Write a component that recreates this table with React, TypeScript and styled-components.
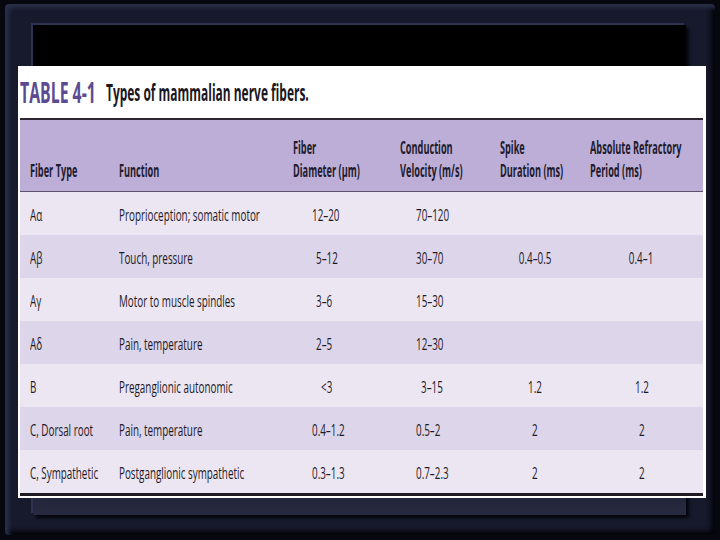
import React from "react";
import styled, { createGlobalStyle } from "styled-components";

const GlobalStyle = createGlobalStyle`
    html, body {
        margin: 0;
        padding: 0;
        background: #0b0c16;
    }
    body {
        font-family: "Open Sans", "Liberation Sans", sans-serif;
    }
`;

const FONT = `"Open Sans", "Liberation Sans", sans-serif`;

type Row = {
    fiber: string;
    fn: string;
    diameter: string;
    velocity: string;
    spike: string;
    refractory: string;
};

const rows: Row[] = [
    { fiber: "Aα", fn: "Proprioception; somatic motor", diameter: "12–20", velocity: "70–120", spike: "", refractory: "" },
    { fiber: "Aβ", fn: "Touch, pressure", diameter: "5–12", velocity: "30–70", spike: "0.4–0.5", refractory: "0.4–1" },
    { fiber: "Aγ", fn: "Motor to muscle spindles", diameter: "3–6", velocity: "15–30", spike: "", refractory: "" },
    { fiber: "Aδ", fn: "Pain, temperature", diameter: "2–5", velocity: "12–30", spike: "", refractory: "" },
    { fiber: "B", fn: "Preganglionic autonomic", diameter: "<3", velocity: "3–15", spike: "1.2", refractory: "1.2" },
    { fiber: "C, Dorsal root", fn: "Pain, temperature", diameter: "0.4–1.2", velocity: "0.5–2", spike: "2", refractory: "2" },
    { fiber: "C, Sympathetic", fn: "Postganglionic sympathetic", diameter: "0.3–1.3", velocity: "0.7–2.3", spike: "2", refractory: "2" },
];

const App = () => {
    return (
        <>
            <GlobalStyle />
            <Slide>
                <Card>
                    <TitleBar>
                        <TableNo>TABLE 4-1</TableNo>
                        <Caption>Types of mammalian nerve fibers.</Caption>
                    </TitleBar>
                    <Table>
                        <HeadRow>
                            <HeadCell><Narrow>Fiber Type</Narrow></HeadCell>
                            <HeadCell><Narrow>Function</Narrow></HeadCell>
                            <HeadCell><Narrow>Fiber<br />Diameter (μm)</Narrow></HeadCell>
                            <HeadCell><Narrow>Conduction<br />Velocity (m/s)</Narrow></HeadCell>
                            <HeadCell><Narrow>Spike<br />Duration (ms)</Narrow></HeadCell>
                            <HeadCell><Narrow>Absolute Refractory<br />Period (ms)</Narrow></HeadCell>
                        </HeadRow>
                        {rows.map((r, i) => (
                            <DataRow key={r.fiber} $shade={i % 2 === 1}>
                                <Cell><Narrow>{r.fiber}</Narrow></Cell>
                                <Cell><Narrow>{r.fn}</Narrow></Cell>
                                <Cell $pad={r.diameter.length <= 2 ? 38 : r.diameter.length <= 4 ? 33 : 29}><Narrow>{r.diameter}</Narrow></Cell>
                                <Cell $pad={r.velocity.length <= 4 ? 31 : 26}><Narrow>{r.velocity}</Narrow></Cell>
                                <Mid><Narrow $mid>{r.spike}</Narrow></Mid>
                                <Mid><Narrow $mid>{r.refractory}</Narrow></Mid>
                            </DataRow>
                        ))}
                    </Table>
                    <BottomRule />
                </Card>
            </Slide>
        </>
    );
};

const Slide = styled.div`
    position: relative;
    width: 720px;
    height: 540px;
    overflow: hidden;
    box-sizing: border-box;
    padding: 66px 0 0 18px;
    background: #07080f;
    &::before {
        content: "";
        position: absolute;
        left: 5px;
        top: 4px;
        right: 5px;
        bottom: 5px;
        border-radius: 4px;
        background: #171a2c;
        box-shadow: inset 4px 4px 4px #2a2e48, inset -4px -4px 5px #04050a;
    }
    &::after {
        content: "";
        position: absolute;
        left: 33px;
        top: 25px;
        right: 34px;
        bottom: 25px;
        background: linear-gradient(to bottom, #000 0%, #000 72%, #1a1c2e 88%, #272a40 100%);
        box-shadow: -2px -2px 0 #30334f, 3px 3px 3px #05060c;
    }
`;

const Card = styled.div`
    position: relative;
    z-index: 1;
    width: 688px;
    height: 432px;
    background: #fff;
    box-sizing: border-box;
    padding: 0 3px 0 2px;
`;

const TitleBar = styled.div`
    height: 52px;
    display: flex;
    align-items: center;
    font-family: ${FONT};
    font-weight: bold;
    white-space: nowrap;
`;

const TableNo = styled.span`
    display: inline-block;
    width: 86px;
    color: #5b4b92;
    font-size: 28px;
    transform: scaleX(0.565);
    transform-origin: left center;
`;

const Caption = styled.span`
    display: inline-block;
    color: #1a171f;
    font-size: 23px;
    transform: scaleX(0.52);
    transform-origin: left center;
`;

const Narrow = styled.span<{ $mid?: boolean }>`
    display: inline-block;
    white-space: nowrap;
    transform: scaleX(0.58);
    transform-origin: ${(p) => (p.$mid ? "center" : "left")} center;
`;

const Table = styled.div`
    border-top: 2px solid #2d2733;
    font-family: ${FONT};
`;

const GRID = "89px 174px 107px 100px 90px 123px";

const HeadRow = styled.div`
    display: grid;
    grid-template-columns: ${GRID};
    height: 71px;
    background: #bcaed6;
    border-bottom: 1px solid #5d5170;
`;

const HeadCell = styled.div`
    align-self: end;
    padding: 0 0 9px 10px;
    color: #221b2e;
    font-size: 18px;
    font-weight: bold;
    line-height: 23px;
    white-space: nowrap;
    span {
        transform: scaleX(0.51);
    }
`;

const DataRow = styled.div<{ $shade: boolean }>`
    display: grid;
    grid-template-columns: ${GRID};
    align-items: center;
    height: 43px;
    padding-top: 1px;
    box-sizing: border-box;
    background: ${(p) => (p.$shade ? "#ddd5ea" : "#ece6f3")};
    color: #1f1a26;
    font-size: 17px;
`;

const Cell = styled.div<{ $pad?: number }>`
    padding-left: ${(p) => p.$pad ?? 10}px;
    white-space: nowrap;
`;

const Mid = styled.div`
    text-align: center;
    white-space: nowrap;
`;

const BottomRule = styled.div`
    height: 3px;
    background: #1e1b22;
`;

export default App;
